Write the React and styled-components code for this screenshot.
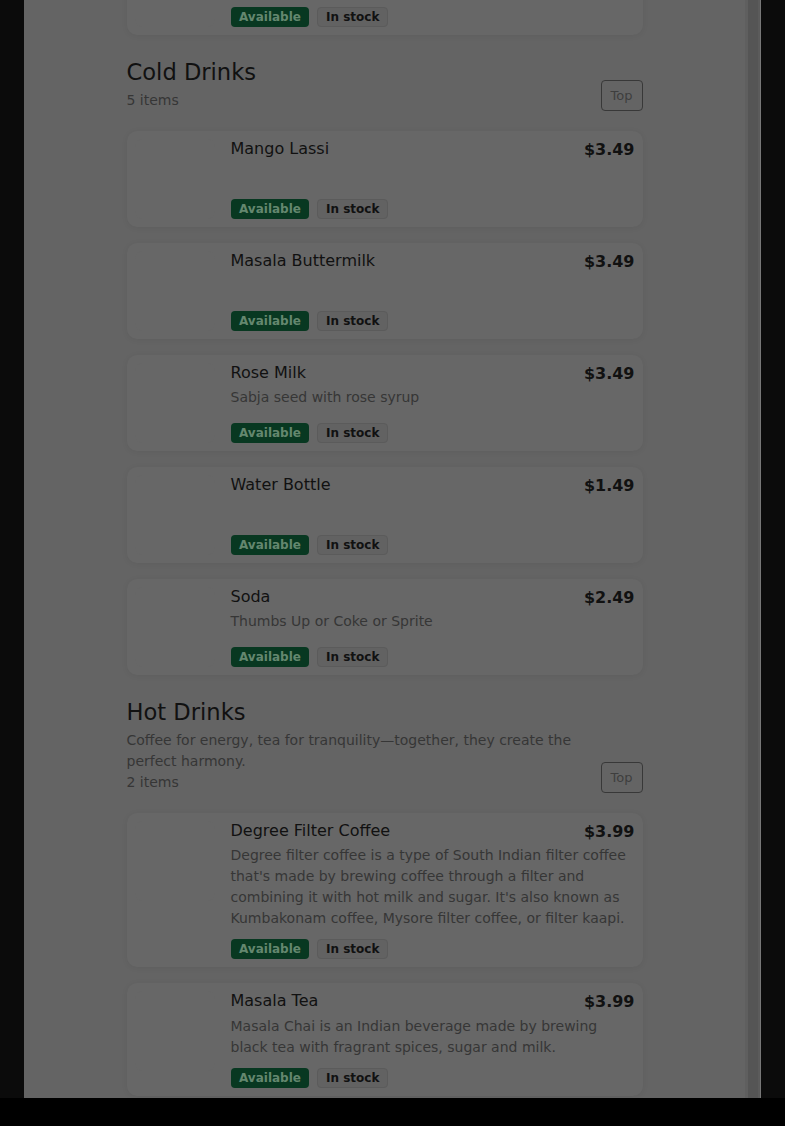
import React, { useLayoutEffect, useRef } from "react";
import styled, { createGlobalStyle } from "styled-components";

const GlobalStyle = createGlobalStyle`
  html, body { margin: 0; padding: 0; height: 100%; }
  body {
    background: #0b0b0b;
    font-family: "DejaVu Sans", Verdana, sans-serif;
    overflow: hidden;
  }
  #root { height: 100%; }
`;

const Screen = styled.div`
  height: 100vh;
  display: flex;
  flex-direction: column;
`;

const Panel = styled.div`
  flex: 1;
  min-height: 0;
  margin: 0 24px;
  background: #646464;
  display: flex;
`;

const Scroller = styled.div`
  flex: 1;
  min-width: 0;
  overflow-y: auto;
  scrollbar-width: none;
  &::-webkit-scrollbar { display: none; }
`;

const ScrollTrack = styled.div`
  width: 16px;
  flex-shrink: 0;
  background: linear-gradient(
    to right,
    #5f5f5f 0 3px,
    #555555 3px 13px,
    #5b5b5b 13px 15px,
    #777777 15px 16px
  );
`;

const BottomBar = styled.div`
  height: 28px;
  background: #000;
  flex-shrink: 0;
`;

const Container = styled.div`
  width: 516px;
  margin: 0 auto;
  padding: 24px 0 40px;
  display: flex;
  flex-direction: column;
  gap: 24px;
`;

const Section = styled.section`
  display: flex;
  flex-direction: column;
`;

const Header = styled.div`
  display: flex;
  align-items: flex-end;
  gap: 16px;
  margin-bottom: 20px;
`;

const HeaderText = styled.div`
  flex: 1;
  min-width: 0;
`;

const SectionTitle = styled.h2`
  margin: 0 0 4px;
  font-size: 22.6px;
  line-height: 27px;
  font-weight: 400;
  color: #111;
`;

const SectionDesc = styled.p`
  margin: 0;
  font-size: 14px;
  line-height: 1.5;
  color: #363636;
`;

const Count = styled.div`
  font-size: 14px;
  line-height: 1.5;
  color: #363636;
`;

const TopButton = styled.button`
  flex-shrink: 0;
  font-family: inherit;
  font-size: 13px;
  line-height: 19px;
  padding: 5px 9px;
  border: 1px solid #383838;
  border-radius: 4px;
  background: transparent;
  color: #3e3e3e;
  cursor: pointer;
`;

const List = styled.div`
  display: flex;
  flex-direction: column;
  gap: 16px;
`;

const Card = styled.article`
  display: flex;
  gap: 16px;
  padding: 8px;
  background: #676767;
  border-radius: 10px;
  box-shadow: 0 1px 6px rgba(0, 0, 0, 0.06);
`;

const Thumb = styled.div`
  width: 80px;
  height: 80px;
  flex-shrink: 0;
  border-radius: 8px;
  background: #676767;
`;

const Body = styled.div`
  flex: 1;
  min-width: 0;
  min-height: 80px;
  display: flex;
  flex-direction: column;
`;

const TopRow = styled.div`
  display: flex;
  justify-content: space-between;
  align-items: flex-start;
  gap: 12px;
`;

const Name = styled.h3`
  margin: 0;
  font-size: 16px;
  line-height: 1.2;
  font-weight: 400;
  color: #111;
`;

const Price = styled.div`
  font-size: 16px;
  line-height: 1.4;
  font-weight: 700;
  color: #111;
  white-space: nowrap;
`;

const Desc = styled.p`
  margin: 2px 0 0;
  font-size: 14px;
  line-height: 1.5;
  color: #363636;
`;

const Badges = styled.div`
  margin-top: auto;
  padding-top: 10px;
  display: flex;
  gap: 8px;
`;

const Badge = styled.span`
  font-size: 12px;
  line-height: 16px;
  font-weight: 700;
  border-radius: 4px;
  padding: ${(p) => (p.$tone === "green" ? "2px 8.5px" : "1px 7.5px")};
  background: ${(p) => (p.$tone === "green" ? "#083821" : "#626262")};
  color: ${(p) => (p.$tone === "green" ? "#64876f" : "#111")};
  border: ${(p) => (p.$tone === "green" ? "none" : "1px solid #5b5b5b")};
`;

const sections = [
  {
    id: "snacks",
    title: "Snacks",
    items: [{ name: "Samosa", price: "$2.99" }],
  },
  {
    id: "cold",
    title: "Cold Drinks",
    items: [
      { name: "Mango Lassi", price: "$3.49" },
      { name: "Masala Buttermilk", price: "$3.49" },
      { name: "Rose Milk", price: "$3.49", desc: "Sabja seed with rose syrup" },
      { name: "Water Bottle", price: "$1.49" },
      { name: "Soda", price: "$2.49", desc: "Thumbs Up or Coke or Sprite" },
    ],
  },
  {
    id: "hot",
    title: "Hot Drinks",
    desc: "Coffee for energy, tea for tranquility—together, they create the perfect harmony.",
    items: [
      {
        name: "Degree Filter Coffee",
        price: "$3.99",
        desc:
          "Degree filter coffee is a type of South Indian filter coffee that's made by brewing coffee through a filter and combining it with hot milk and sugar. It's also known as Kumbakonam coffee, Mysore filter coffee, or filter kaapi.",
      },
      {
        name: "Masala Tea",
        price: "$3.99",
        desc:
          "Masala Chai is an Indian beverage made by brewing black tea with fragrant spices, sugar and milk.",
      },
    ],
  },
];

function MenuCard({ item }) {
  return (
    <Card>
      <Thumb />
      <Body>
        <TopRow>
          <Name>{item.name}</Name>
          <Price>{item.price}</Price>
        </TopRow>
        {item.desc && <Desc>{item.desc}</Desc>}
        <Badges>
          <Badge $tone="green">Available</Badge>
          <Badge>In stock</Badge>
        </Badges>
      </Body>
    </Card>
  );
}

export default function App() {
  const scrollRef = useRef(null);
  const anchorRef = useRef(null);

  useLayoutEffect(() => {
    const scroller = scrollRef.current;
    const anchor = anchorRef.current;
    if (!scroller || !anchor) return;
    const delta =
      anchor.getBoundingClientRect().top - scroller.getBoundingClientRect().top;
    scroller.scrollTop = Math.round(delta - 59);
  }, []);

  return (
    <>
      <GlobalStyle />
      <Screen>
        <Panel>
          <Scroller ref={scrollRef}>
            <Container>
              {sections.map((s) => (
                <Section key={s.id} ref={s.id === "cold" ? anchorRef : undefined}>
                  <Header>
                    <HeaderText>
                      <SectionTitle>{s.title}</SectionTitle>
                      {s.desc && <SectionDesc>{s.desc}</SectionDesc>}
                      <Count>{s.items.length} items</Count>
                    </HeaderText>
                    <TopButton>Top</TopButton>
                  </Header>
                  <List>
                    {s.items.map((it) => (
                      <MenuCard key={it.name} item={it} />
                    ))}
                  </List>
                </Section>
              ))}
            </Container>
          </Scroller>
          <ScrollTrack />
        </Panel>
        <BottomBar />
      </Screen>
    </>
  );
}
